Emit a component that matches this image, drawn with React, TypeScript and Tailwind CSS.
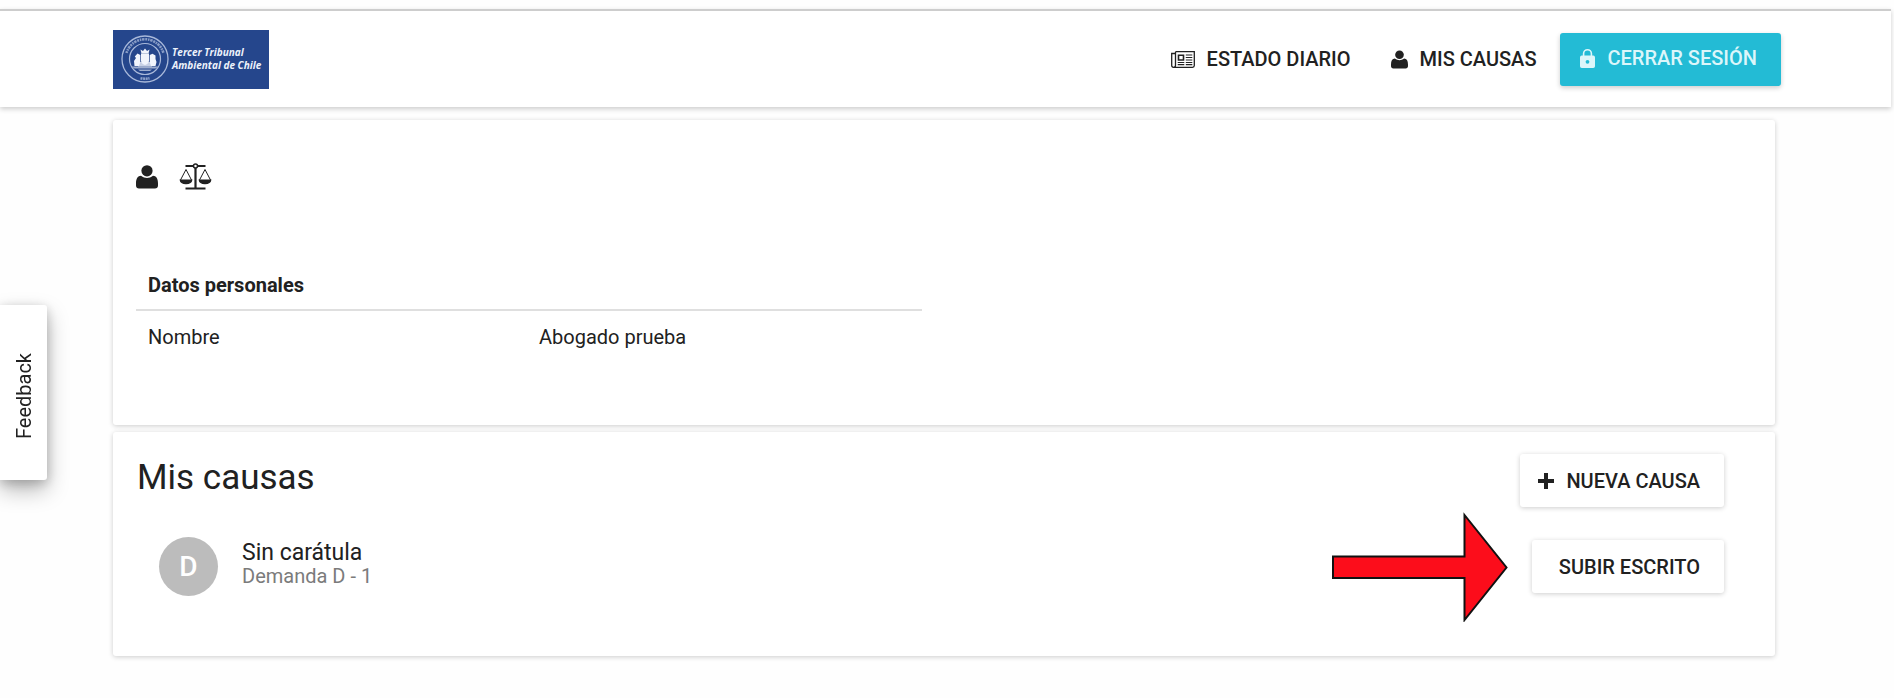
import React from "react";

function UserIcon({ className }: { className?: string }) {
  return (
    <svg viewBox="0 0 22 24" fill="currentColor" className={className} aria-hidden="true">
      <ellipse cx="11" cy="5.800" rx="5.600" ry="5.600" />
      <path d="M5 10.800C7 12.300 9 13 11 13S15 12.300 17 10.800C20.300 11 22 13.600 22 18.500V20.500C22 22.600 20.800 23.500 19 23.500H3C1.200 23.500 0 22.600 0 20.500V18.500C0 13.600 1.700 11 5 10.800z" />
    </svg>
  );
}

function NewspaperIcon() {
  return (
    <svg viewBox="0 0 24 17" fill="none" stroke="currentColor" strokeWidth="1.3" className="w-6 h-[17px]" aria-hidden="true">
      <path d="M4.500 .7H23.300V14.500Q23.300 16.300 21.500 16.300H2.500Q.7 16.300 .7 14.500V2.500H4.500M4.500 .7V14.500Q4.500 16.300 2.600 16.300" />
      <path strokeWidth="1.6" d="M7.500 4.200h5v4.800h-5z" />
      <path strokeWidth="1.100" d="M14.800 4H21.300M14.800 6.500H21.300M14.800 9H21.300M6.700 11.500h6.600M14.800 11.500H21.300M6.700 13.600h6.600M14.800 13.600H21.300" />
    </svg>
  );
}

function LockIcon() {
  return (
    <svg viewBox="0 0 15 19" fill="currentColor" className="w-[15px] h-[19px]" aria-hidden="true">
      <path fillRule="evenodd" d="M1.800 6.600H13.200Q15 6.600 15 8.400V17.200Q15 19 13.200 19H1.800Q0 19 0 17.200V8.400Q0 6.600 1.800 6.600zM7.500 10.900a1.900 1.900 0 1 0 0 3.800 1.900 1.900 0 0 0 0-3.800z" />
      <path fill="none" stroke="currentColor" strokeWidth="1.600" d="M3.600 7V4.600a3.900 3.800 0 0 1 7.800 0V7" />
    </svg>
  );
}

function PlusIcon() {
  return (
    <svg viewBox="0 0 16 16" fill="none" stroke="currentColor" strokeWidth="4" strokeLinejoin="round" className="w-4 h-4" aria-hidden="true">
      <path d="M8 0V16M0 8H16" />
    </svg>
  );
}

function ScalesIcon() {
  return (
    <svg viewBox="0 0 33 27" fill="none" stroke="currentColor" className="w-[33px] h-[27px]" aria-hidden="true">
      <path strokeWidth="1.800" d="M6.500 3H14.300M18.700 3H26.500M6.500 25.500H26.500" />
      <circle cx="16.500" cy="3" r="2" strokeWidth="1.500" />
      <path strokeWidth="2.200" d="M16.500 5V25" />
      <path strokeWidth="1" d="M1.500 17 7 6.500 12.500 17M20.500 17 26 6.500 31.500 17" />
      <path fill="currentColor" stroke="none" d="M.5 16.500h13q-.6 4.800-6.500 4.800T.5 16.500zM19.500 16.500h13q-.6 4.800-6.500 4.800t-6.500-4.800z" />
    </svg>
  );
}

function Logo() {
  return (
    <a href="#" className="flex items-center gap-[3px] w-[156px] h-[59px] pl-2 bg-[#25468c] text-[#edf2fb]">
      <svg viewBox="0 0 48 48" className="w-12 h-12 shrink-0" fill="none" stroke="#a9b9da" aria-hidden="true">
        <circle cx="24" cy="24" r="23" strokeWidth="1.300" />
        <circle cx="24" cy="24" r="15.500" strokeWidth="1.200" />
        <path d="M5.500 18A19.300 19.300 0 0 1 42.500 18" strokeWidth="2.600" strokeDasharray="2 .8 1.500 .7 2.500 .8" opacity=".75" />
        <path d="M19.500 43.200Q24 44.200 28.500 43.200" strokeWidth="2.500" strokeDasharray="2 .6" opacity=".8" />
        <g fill="#f1f5fc" stroke="none">
          <path d="M19.500 14.500 22 16 24 13.500 26 16 28.500 14.500 27.500 18.500H20.500z" />
          <path d="M20 18.500h8v7q0 3-4 4.500Q20 28.500 20 25.500z" />
          <path d="M19.300 20 16.500 18.500 13.800 21.500 15 23 13 26 13.500 31H18L19.300 27zM28.700 20 31.500 18.800 34.500 20.500 34.500 24 35.500 27 34.500 31H30L28.700 27z" />
          <path d="M17 27h14v4.500H17z" opacity=".8" />
          <path d="M10.500 31.500h27l-3 2h-21zM17 34.500h14l-2 1.500H19z" opacity=".6" />
        </g>
      </svg>
      <span className="font-['Open_Sans',sans-serif] text-[10px] leading-[13px] font-bold italic whitespace-nowrap">
        Tercer Tribunal
        <br />
        Ambiental de Chile
      </span>
    </a>
  );
}

function Header() {
  return (
    <header className="relative z-10 flex items-center justify-between h-[98px] mr-[3px] pl-[113px] pr-[110px] bg-white border-t-2 border-[#cdcdcd] shadow-[0_2px_5px_rgba(0,0,0,0.2)]">
      <Logo />
      <nav className="flex items-center text-xl font-medium">
        <a href="#" className="flex items-center gap-3 mr-10">
          <NewspaperIcon />
          ESTADO DIARIO
        </a>
        <a href="#" className="flex items-center gap-3 mr-6">
          <UserIcon className="w-[17px] h-[19px]" />
          MIS CAUSAS
        </a>
        <button className="flex items-center gap-3 h-[53px] pl-5 pr-6 pb-[2px] rounded-[3px] bg-[#23bbd5] text-[#dcf6fa] shadow-[0_2px_5px_rgba(0,0,0,0.2)]">
          <LockIcon />
          CERRAR SESIÓN
        </button>
      </nav>
    </header>
  );
}

const cardClass = "rounded-[3px] bg-white shadow-[0_1px_5px_rgba(0,0,0,0.2)]";
const buttonClass =
  "flex items-center gap-3 h-[53px] pr-6 rounded-[3px] bg-white text-xl font-medium shadow-[0_1px_5px_rgba(0,0,0,0.2)]";

function PersonalData() {
  return (
    <section className={`h-[305px] px-[23px] pt-[43px] ${cardClass}`}>
      <div className="flex items-center gap-[21px]">
        <UserIcon className="w-[22px] h-6" />
        <ScalesIcon />
      </div>
      <table className="mt-[71px] w-[786px] max-w-full table-fixed text-left text-xl leading-6">
        <thead>
          <tr className="border-b-2 border-[#dfdfdf]">
            <th colSpan={2} className="px-3 py-3 font-bold">Datos personales</th>
          </tr>
        </thead>
        <tbody>
          <tr>
            <td className="px-3 py-[14px]">Nombre</td>
            <td className="px-[10px] py-[14px]">Abogado prueba</td>
          </tr>
        </tbody>
      </table>
    </section>
  );
}

function Cases() {
  return (
    <section className={`h-[224px] pl-6 pr-[51px] pt-[22px] ${cardClass}`}>
      <div className="flex items-center justify-between">
        <h1 className="pb-[6px] text-[35px] leading-10">Mis causas</h1>
        <button className={`pl-[18px] ${buttonClass}`}>
          <PlusIcon />
          NUEVA CAUSA
        </button>
      </div>
      <div className="flex items-center mt-[30px] pl-[22px]">
        <div className="flex items-center justify-center w-[59px] h-[59px] rounded-full bg-[#bcbcbc] text-white text-[28px] font-medium">
          D
        </div>
        <div className="ml-6 pb-[6px]">
          <p className="text-[23px] leading-6">Sin carátula</p>
          <p className="text-xl leading-[22px] text-[#7b7b7b]">Demanda D - 1</p>
        </div>
        <div className="relative ml-auto">
          <svg viewBox="0 0 176 110" className="absolute right-full top-1/2 -translate-y-1/2 mr-6 w-[176px] h-[110px]" aria-hidden="true">
            <path d="M1 44.500H132.500V3L174.500 55.500 132.500 108V66H1z" fill="#fc0d1b" stroke="#111" strokeWidth="2" />
          </svg>
          <button className={`pl-[27px] ${buttonClass}`}>SUBIR ESCRITO</button>
        </div>
      </div>
    </section>
  );
}

export default function App() {
  return (
    <div className="min-h-screen bg-[#fefefe] pt-[9px] font-[Roboto,sans-serif] text-[#212121]">
      <Header />
      <main className="flex flex-col gap-[7px] mt-[13px] ml-[113px] mr-[119px]">
        <PersonalData />
        <Cases />
      </main>
      <button className="fixed left-0 top-[305px] z-20 flex items-center justify-center w-[47px] h-[175px] pt-2 rounded-r-[3px] bg-white text-xl shadow-[0_10px_22px_rgba(0,0,0,0.28),0_3px_12px_rgba(0,0,0,0.2)]">
        <span className="[writing-mode:vertical-rl] rotate-180">Feedback</span>
      </button>
    </div>
  );
}
